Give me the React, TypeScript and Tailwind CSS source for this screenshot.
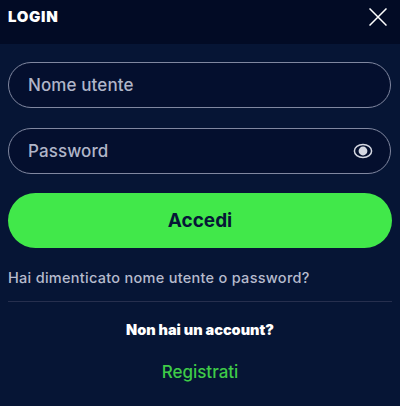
const font = { fontFamily: "Inter, 'Liberation Sans', sans-serif" };

function Campo({ label, occhio = false }: { label: string; occhio?: boolean }) {
  return (
    <div className="flex h-[46px] items-center justify-between rounded-[23px] border border-[#8087a0] bg-[#040f2e] pl-[19px] pr-[17px]">
      <span className="pt-px text-[17px] font-medium tracking-[0.1px] text-[#b0b5c8]">{label}</span>
      {occhio && (
        <svg width="20" height="16" viewBox="0 0 20 16" fill="none">
          <ellipse cx="10" cy="8" rx="8.6" ry="6.6" stroke="#d5d8e2" strokeWidth="1.5" />
          <circle cx="10" cy="8" r="4.4" fill="#d5d8e2" />
        </svg>
      )}
    </div>
  );
}

export default function App() {
  return (
    <div className="h-[406px] w-[400px] overflow-hidden bg-[#061535]" style={font}>
      <div className="flex h-[44px] items-start justify-between bg-[#020b25] pl-[8px] pr-[13px] pt-[8px]">
        <h1 className="text-[15px] font-black leading-[18px] tracking-[0.7px] text-white">LOGIN</h1>
        <svg width="18" height="18" viewBox="0 0 18 18" fill="none" stroke="#ffffff" strokeWidth="1.5">
          <path d="M0.5 0.5 17.5 17.5M17.5 0.5 0.5 17.5" />
        </svg>
      </div>
      <div className="px-[8px] pt-[18px]">
        <div className="flex flex-col gap-[20px] pr-px">
          <Campo label="Nome utente" />
          <Campo label="Password" occhio />
        </div>
        <button className="mt-[19px] flex h-[55px] w-full items-center justify-center rounded-[28px] bg-[#41e84a] pt-px text-[19px] font-bold text-[#061636]">
          Accedi
        </button>
        <p className="mt-[21px] text-[14.5px] font-medium leading-[18px] tracking-[0.28px] text-[#b6bbcd]">
          Hai dimenticato nome utente o password?
        </p>
        <div className="mt-[14px] h-px bg-[#262f4e]" />
        <p className="mt-[19px] text-center text-[14.5px] font-black leading-[18px] text-white">
          Non hai un account?
        </p>
        <p className="mt-[21px] text-center text-[17px] font-medium leading-[24px] text-[#3fcb48]">Registrati</p>
      </div>
    </div>
  );
}
